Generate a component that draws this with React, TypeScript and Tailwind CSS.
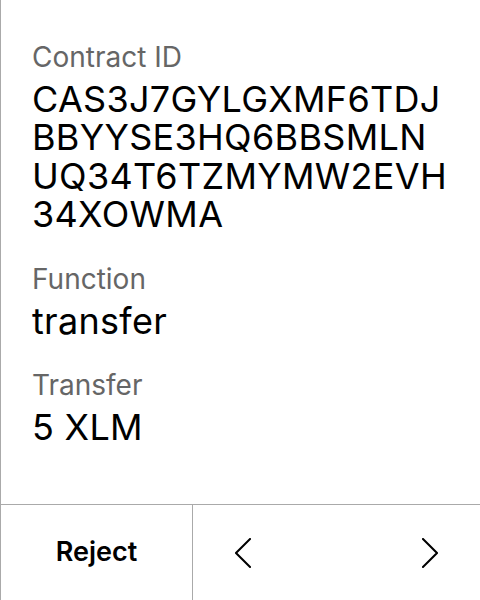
const fields = [
  { label: "Contract ID", value: "CAS3J7GYLGXMF6TDJBBYYSE3HQ6BBSMLNUQ34T6TZMYMW2EVH34XOWMA" },
  { label: "Function", value: "transfer" },
  { label: "Transfer", value: "5 XLM" },
];

const Chevron = ({ dir }: { dir: "left" | "right" }) => (
  <svg width="16" height="30" viewBox="0 0 16 30" fill="none">
    <polyline
      points={dir === "left" ? "15,1 1,15 15,29" : "1,1 15,15 1,29"}
      stroke="#000"
      strokeWidth="2"
      strokeLinecap="square"
    />
  </svg>
);

export default function App() {
  return (
    <div className="flex h-[600px] w-[480px] flex-col border-l border-[#aaaaaa] bg-white font-['Inter',sans-serif] text-black">
      <div className="flex flex-1 flex-col gap-[28px] pl-[31px] pr-[30px] pt-[40px]">
        {fields.map((f) => (
          <div key={f.label} className="flex flex-col gap-[6px]">
            <span className="text-[28px] leading-[34px] text-[#666666]">{f.label}</span>
            <span className="break-all text-[36px] leading-[38.4px] tracking-[0.3px]">{f.value}</span>
          </div>
        ))}
      </div>
      <div className="flex h-[96px] border-t border-[#aaaaaa]">
        <button className="flex w-[192px] items-center justify-center border-r border-[#aaaaaa] text-[27px] font-semibold">
          Reject
        </button>
        <div className="flex flex-1 items-center justify-between px-[42px]">
          <Chevron dir="left" />
          <Chevron dir="right" />
        </div>
      </div>
    </div>
  );
}
